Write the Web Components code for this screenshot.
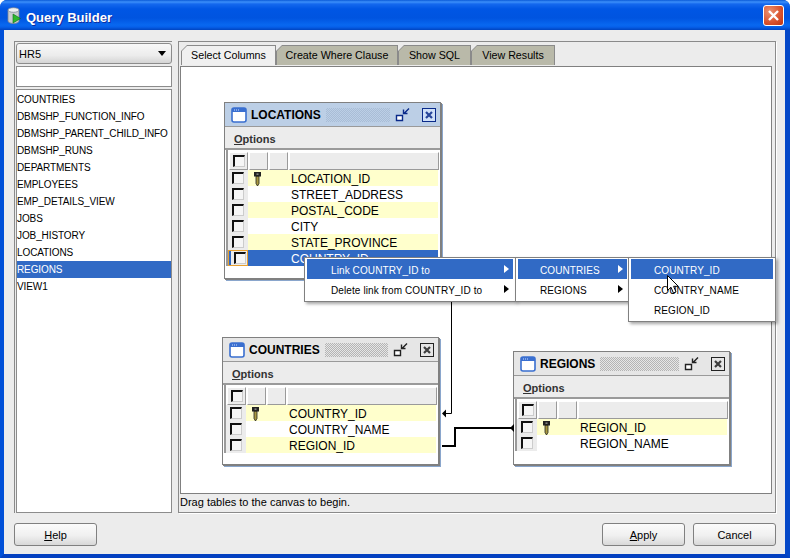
<!DOCTYPE html>
<html>
<head>
<meta charset="utf-8">
<title>Query Builder</title>
<style>
  html, body { margin: 0; padding: 0; background: #fff; }
  body { font-family: "Liberation Sans", Arial, sans-serif; font-size: 11px; color: #000; }
</style>
</head>
<body>
<qb-window heading="Query Builder">
  <qb-sidebar slot="side" schema="HR5" selected="REGIONS"
    items="COUNTRIES,DBMSHP_FUNCTION_INFO,DBMSHP_PARENT_CHILD_INFO,DBMSHP_RUNS,DEPARTMENTS,EMPLOYEES,EMP_DETAILS_VIEW,JOBS,JOB_HISTORY,LOCATIONS,REGIONS,VIEW1"></qb-sidebar>
  <qb-tabs slot="main" labels="Select Columns,Create Where Clause,Show SQL,View Results" status="Drag tables to the canvas to begin.">
    <svg class="links" slot="links" viewBox="181 67 590 426" width="590" height="426" style="position:absolute;left:0;top:0;z-index:3">
      <path d="M451.500 290V413.500H445" fill="none" stroke="#000" stroke-width="1"/>
      <path d="M442 413.500L446 409.500V417.500Z" fill="#000"/>
      <path d="M442 446H455V428H512" fill="none" stroke="#000" stroke-width="2"/>
      <path d="M510 428L514 424V432Z" fill="#000"/>
    </svg>
    <qb-table name="LOCATIONS" active style="left:43px;top:35px" height="177"
      cols="LOCATION_ID*,STREET_ADDRESS,POSTAL_CODE,CITY,STATE_PROVINCE,COUNTRY_ID" selected="COUNTRY_ID"></qb-table>
    <qb-table name="COUNTRIES" style="left:41px;top:270px" height="128"
      cols="COUNTRY_ID*,COUNTRY_NAME,REGION_ID"></qb-table>
    <qb-table name="REGIONS" style="left:332px;top:284px" height="114"
      cols="REGION_ID*,REGION_NAME"></qb-table>
  </qb-tabs>
  <qb-button slot="left" label="Help" mnemonic="H"></qb-button>
  <qb-button slot="right" label="Apply" mnemonic="A"></qb-button>
  <qb-button slot="right" label="Cancel"></qb-button>
  <qb-menu slot="overlay" style="left:304px;top:257px;width:212px" pad="24" arrows active="0"
    items="Link COUNTRY_ID to,Delete link from COUNTRY_ID to"></qb-menu>
  <qb-menu slot="overlay" style="left:515px;top:257px;width:115px" pad="22" arrows active="0"
    items="COUNTRIES,REGIONS"></qb-menu>
  <qb-menu slot="overlay" style="left:628px;top:257px;width:148px" pad="23" active="0"
    items="COUNTRY_ID,COUNTRY_NAME,REGION_ID"></qb-menu>
  <svg slot="overlay" width="13" height="20" viewBox="0 0 13 20" style="position:absolute;left:667px;top:275px;z-index:20">
    <path d="M.5.5V15.500L4 12.200 6.400 18 9 16.900 6.600 11.300H11.300Z" fill="#fff" stroke="#000" stroke-width="1"/>
  </svg>
</qb-window>

<script>
// small helper, every element below renders once into its own open shadow root
class QbBase extends HTMLElement {
  constructor() {
    super();
    this.attachShadow({ mode: "open" });
  }
  connectedCallback() {
    this.shadowRoot.innerHTML = this.render();
  }
  list(name) {
    return (this.getAttribute(name) || "").split(",").filter(Boolean);
  }
}

class QbWindow extends QbBase {
  render() {
    return /* html */`
    <style>
      :host { display: block; position: relative; width: 790px; height: 558px; overflow: hidden; }
      .frame {
        box-sizing: border-box; width: 790px; height: 558px;
        display: flex; flex-direction: column;
        background: #0054e3; border-radius: 7px 7px 0 0;
        border-left: 4px solid #0150d8; border-right: 5px solid #0548c8; border-bottom: 4px solid #0340c0;
      }
      .bar {
        height: 30px; margin: 0 -5px 0 -4px; padding: 0 6px 0 7px; flex: none;
        display: flex; align-items: center; gap: 5px;
        border-radius: 7px 7px 0 0;
        background: linear-gradient(#0a5ad8 0, #3c8ffa 2px, #1468ee 4px, #0056e4 9px, #0054e0 18px, #0868f0 25px, #0660ea 27px, #0044c0 30px);
        color: #fff; font: bold 13px "Liberation Sans", Arial, sans-serif;
        text-shadow: 1px 1px 0 #0f2f9f;
      }
      .bar span { flex: 1; padding-top: 4px; }
      .close {
        box-sizing: border-box; width: 21px; height: 21px; border: 1px solid #fff; border-radius: 3px;
        background: radial-gradient(circle at 30% 30%, #ea9272, #d9512c 60%, #bf3410);
        display: flex; align-items: center; justify-content: center;
      }
      .content { flex: 1; min-height: 0; background: #ececec; display: flex; flex-direction: column; padding: 11px 9px 8px 10px; }
      .panes { display: flex; gap: 6px; height: 472px; }
      .foot { display: flex; justify-content: space-between; margin-top: 10px; }
      .foot div { display: flex; gap: 8px; }
    </style>
    <div class="frame">
      <div class="bar">
        <svg width="14" height="17" viewBox="0 0 14 17">
          <path d="M1 3V14C1 15.600 4 16.500 6.500 16.500S12 15.600 12 14V3Z" fill="#c9ccd0" stroke="#7d8794" stroke-width=".8"/>
          <ellipse cx="6.500" cy="3" rx="5.500" ry="2.300" fill="#eef0f2" stroke="#7d8794" stroke-width=".8"/>
          <path d="M6 7V16L13.500 11.500Z" fill="#2eb82e" stroke="#0d6e18" stroke-width=".6"/>
        </svg>
        <span>${this.getAttribute("heading")}</span>
        <div class="close">
          <svg width="13" height="13" viewBox="0 0 13 13"><path d="M2 2L11 11M11 2L2 11" stroke="#fff" stroke-width="2.400"/></svg>
        </div>
      </div>
      <div class="content">
        <div class="panes"><slot name="side"></slot><slot name="main"></slot></div>
        <div class="foot">
          <div><slot name="left"></slot></div>
          <div><slot name="right"></slot></div>
        </div>
      </div>
    </div>
    <slot name="overlay"></slot>`;
  }
}

class QbSidebar extends QbBase {
  render() {
    const selected = this.getAttribute("selected");
    const rows = this.list("items").map((i) =>
      `<div class="row ${i === selected ? "sel" : ""}">${i}</div>`).join("");
    return /* html */`
    <style>
      :host {
        display: flex; flex-direction: column; gap: 2px; box-sizing: border-box;
        width: 158px; height: 472px; padding: 1px 0 0 1px;
        border-top: 1px solid #8a8a8a; border-left: 1px solid #8a8a8a;
        font: 10px "Liberation Sans", Arial, sans-serif;
      }
      .combo {
        box-sizing: border-box; height: 21px; flex: none; border: 1px solid #8c8c8c; border-radius: 3px;
        background: linear-gradient(#f8f8f8, #ececec 60%, #d4d4d4);
        display: flex; align-items: center; justify-content: space-between; padding: 0 3px 0 2px;
        font-size: 11px;
      }
      .combo i { width: 0; height: 0; border: 4px solid transparent; border-top: 5px solid #000; border-bottom: 0; margin-right: 2px; }
      .field { box-sizing: border-box; height: 21px; flex: none; border: 1px solid #8c8c8c; background: #fff; }
      .rows { box-sizing: border-box; flex: 1; border: 1px solid #8c8c8c; background: #fff; padding-top: 1px; }
      .row { height: 17px; line-height: 17px; letter-spacing: -.1px; white-space: nowrap; overflow: hidden; }
      .sel { background: #316ac5; color: #fff; }
    </style>
    <div class="combo"><span>${this.getAttribute("schema")}</span><i></i></div>
    <div class="field"></div>
    <div class="rows">${rows}</div>`;
  }
}

class QbTabs extends QbBase {
  render() {
    const widths = [95, 122, 73, 84];
    const tabs = this.list("labels").map((l, n) =>
      `<div class="tab ${n === 0 ? "on" : ""}" style="width:${widths[n]}px"><b>${l}</b></div>`).join("");
    return /* html */`
    <style>
      :host {
        display: flex; flex-direction: column; box-sizing: border-box;
        width: 598px; height: 472px; padding: 3px 2px 0 1px;
        border: 1px solid #8a8a8a;
        box-shadow: 1px 1px 0 #fff;
        font: 10.7px "Liberation Sans", Arial, sans-serif;
      }
      .strip { display: flex; height: 20px; padding-left: 1px; flex: none; }
      .tab {
        box-sizing: border-box; height: 20px; padding: 1px 1px 0 1px; background: #8a8a8a;
        clip-path: polygon(6px 0, 100% 0, 100% 100%, 0 100%, 0 6px);
      }
      .tab b {
        display: block; height: 19px; line-height: 18px; text-align: center; font-weight: normal;
        background: #b9b9a9;
        clip-path: polygon(5px 0, 100% 0, 100% 100%, 0 100%, 0 5px);
      }
      .on b { background: #f0f0f0; height: 20px; }
      .canvas { position: relative; box-sizing: border-box; width: 592px; height: 428px; margin-top: 1px; flex: none; border: 1px solid #808080; background: #fff; overflow: hidden; }
      .status { height: 17px; line-height: 17px; font-size: 11px; }
    </style>
    <div class="strip">${tabs}</div>
    <div class="canvas"><slot name="links"></slot><slot></slot></div>
    <div class="status">${this.getAttribute("status")}</div>`;
  }
}

// one table window on the canvas, a trailing * on a column means primary key
class QbTable extends QbBase {
  render() {
    const sel = this.getAttribute("selected");
    const active = this.hasAttribute("active");
    const ink = active ? "#0a2a8a" : "#222";
    const key = /* html */`<svg width="7" height="14" viewBox="0 0 7 14"><path d="M2 4H5V11.500L3.500 14 2 11.500Z" fill="#a89840" stroke="#222" stroke-width=".8"/><path d="M0 0H7V4.500H0Z" fill="#222"/><path d="M2.500 1.500H4.500V2.800H2.500Z" fill="#999"/></svg>`;
    const rows = this.list("cols").map((c, n) => {
      const pk = c.endsWith("*");
      const name = pk ? c.slice(0, -1) : c;
      const cls = name === sel ? "sel" : (n % 2 === 0 ? "odd" : "");
      return /* html */`<div class="tr ${cls}">
        <div class="chk"><i></i></div><div class="k">${pk ? key : ""}</div><div class="name">${name}</div></div>`;
    }).join("");
    return /* html */`
    <style>
      :host {
        position: absolute; display: block; box-sizing: border-box; width: 217px; height: ${this.getAttribute("height")}px;
        border: 1px solid #808080; background: #fff; z-index: 2;
        box-shadow: 1px 1px 0 #808080, 2px 2px 0 #8aa6cc;
        font: 12px "Liberation Sans", Arial, sans-serif;
      }
      .title {
        height: 24px; display: flex; align-items: center; padding: 0 4px 0 6px; gap: 4px;
        background: ${active ? "#bccfe6" : "#e6e6e6"}; border-bottom: 1px solid #9a9a9a; box-sizing: border-box;
      }
      .title b { font-size: 12px; }
      .dots {
        flex: 1; height: 14px; margin: 0 1px;
        background: repeating-conic-gradient(${active ? "#a9bdd6" : "#b4b4b4"} 0 25%, transparent 0 50%) 0 0 / 2px 2px;
      }
      .tools { display: flex; gap: 11px; align-items: center; }
      .options { height: 23px; box-sizing: border-box; padding-left: 9px; background: #ececec; font: bold 11px/24px "Liberation Sans", Arial, sans-serif; color: #333; border-bottom: 2px solid #9a9a9a; }
      .options u { text-decoration: underline; }
      .grid { margin-left: 1px; padding-top: 2px; border-left: 2px solid #9a9a9a; }
      .head { display: flex; height: 18px; gap: 1px; padding-left: 1px; }
      .head div { box-sizing: border-box; width: 19px; background: #ececec; border: 1px solid; border-color: #fff #9a9a9a #9a9a9a #fff; }
      .head div:first-child { display: flex; align-items: center; justify-content: center; }
      .head div:last-child { width: 150px; }
      .tr { display: flex; height: 16px; width: 210px; line-height: 18px; white-space: nowrap; }
      .chk { width: 20px; flex: none; background: #ececec; display: flex; align-items: center; justify-content: center; box-sizing: border-box; }
      i { display: block; box-sizing: border-box; width: 12px; height: 12px; background: #f6f6f6; border: 1px solid; border-width: 2px 1px 1px 2px; border-color: #111 #ccc #ccc #111; }
      .k { width: 43px; flex: none; padding-left: 6px; box-sizing: border-box; overflow: hidden; }
      .k svg { display: block; margin-top: 2px; }
      .name { flex: 1; overflow: hidden; }
      .odd .k, .odd .name { background: #ffffcc; }
      .sel .k, .sel .name { background: #316ac5; color: #fff; }
      .sel .chk { outline: 1px solid #e8a030; outline-offset: -1px; border-left: 3px solid #316ac5; }
    </style>
    <div class="title">
      <svg width="16" height="16" viewBox="0 0 16 16"><rect x="1" y="1" width="14" height="14" rx="2" fill="#fff" stroke="#3a6fd0" stroke-width="1.600"/><rect x="1" y="1" width="14" height="4" fill="#3a6fd0"/><path d="M3 3H8" stroke="#cfe0ff" stroke-dasharray="1 1"/></svg>
      <b>${this.getAttribute("name")}</b>
      <div class="dots"></div>
      <div class="tools">
        <svg width="16" height="15" viewBox="0 0 16 15"><path d="M1.500 8.500H7.500V13.500H1.500Z" fill="#fff" stroke="${ink}" stroke-width="1.400"/><path d="M9 6.500L14 1.500M8.500 2.500V6.500H12.500" fill="none" stroke="${ink}" stroke-width="1.400"/></svg>
        <svg width="14" height="14" viewBox="0 0 14 14"><rect x=".5" y=".5" width="13" height="13" fill="${active ? "#cfe0f8" : "#e6e6e6"}" stroke="${ink}"/><path d="M4 4L10 10M10 4L4 10" stroke="${ink}" stroke-width="2.200" opacity=".85"/></svg>
      </div>
    </div>
    <div class="options"><u>O</u>ptions</div>
    <div class="grid">
      <div class="head"><div><i></i></div><div></div><div></div><div></div></div>
      ${rows}
    </div>`;
  }
}

class QbMenu extends QbBase {
  render() {
    const pad = this.getAttribute("pad");
    const active = Number(this.getAttribute("active"));
    const arrows = this.hasAttribute("arrows");
    const rows = this.list("items").map((t, n) => /* html */`
      <div class="item ${n === active ? "on" : ""}"><span>${t}</span>${arrows ? "<i></i>" : ""}</div>`).join("");
    return /* html */`
    <style>
      :host {
        position: absolute; display: block; box-sizing: border-box; z-index: 10;
        background: #fff; border: 1px solid #808080; padding: 1px 2px 2px;
        box-shadow: 2px 2px 3px rgba(0,0,0,.35);
        font: 10px "Liberation Sans", Arial, sans-serif;
      }
      .item { box-sizing: border-box; height: 20px; display: flex; align-items: center; justify-content: space-between; padding: 3px 4px 0 ${pad}px; white-space: nowrap; letter-spacing: .1px; }
      .on { background: #316ac5; color: #fff; }
      i { width: 0; height: 0; margin-top: -3px; border: 4px solid transparent; border-left: 5px solid currentColor; border-right: 0; }
    </style>
    ${rows}`;
  }
}

class QbButton extends QbBase {
  render() {
    const label = this.getAttribute("label");
    const m = this.getAttribute("mnemonic");
    const text = m ? label.replace(m, `<u>${m}</u>`) : label;
    return /* html */`
    <style>
      :host {
        display: flex; align-items: center; justify-content: center; box-sizing: border-box;
        width: 83px; height: 23px; border: 1px solid #808080; border-radius: 3px;
        background: linear-gradient(#fbfbfb, #f0f0f0 55%, #d8d8d8);
        font: 11px "Liberation Sans", Arial, sans-serif;
      }
    </style>
    <span>${text}</span>`;
  }
}

customElements.define("qb-window", QbWindow);
customElements.define("qb-sidebar", QbSidebar);
customElements.define("qb-tabs", QbTabs);
customElements.define("qb-table", QbTable);
customElements.define("qb-menu", QbMenu);
customElements.define("qb-button", QbButton);
</script>
</body>
</html>
